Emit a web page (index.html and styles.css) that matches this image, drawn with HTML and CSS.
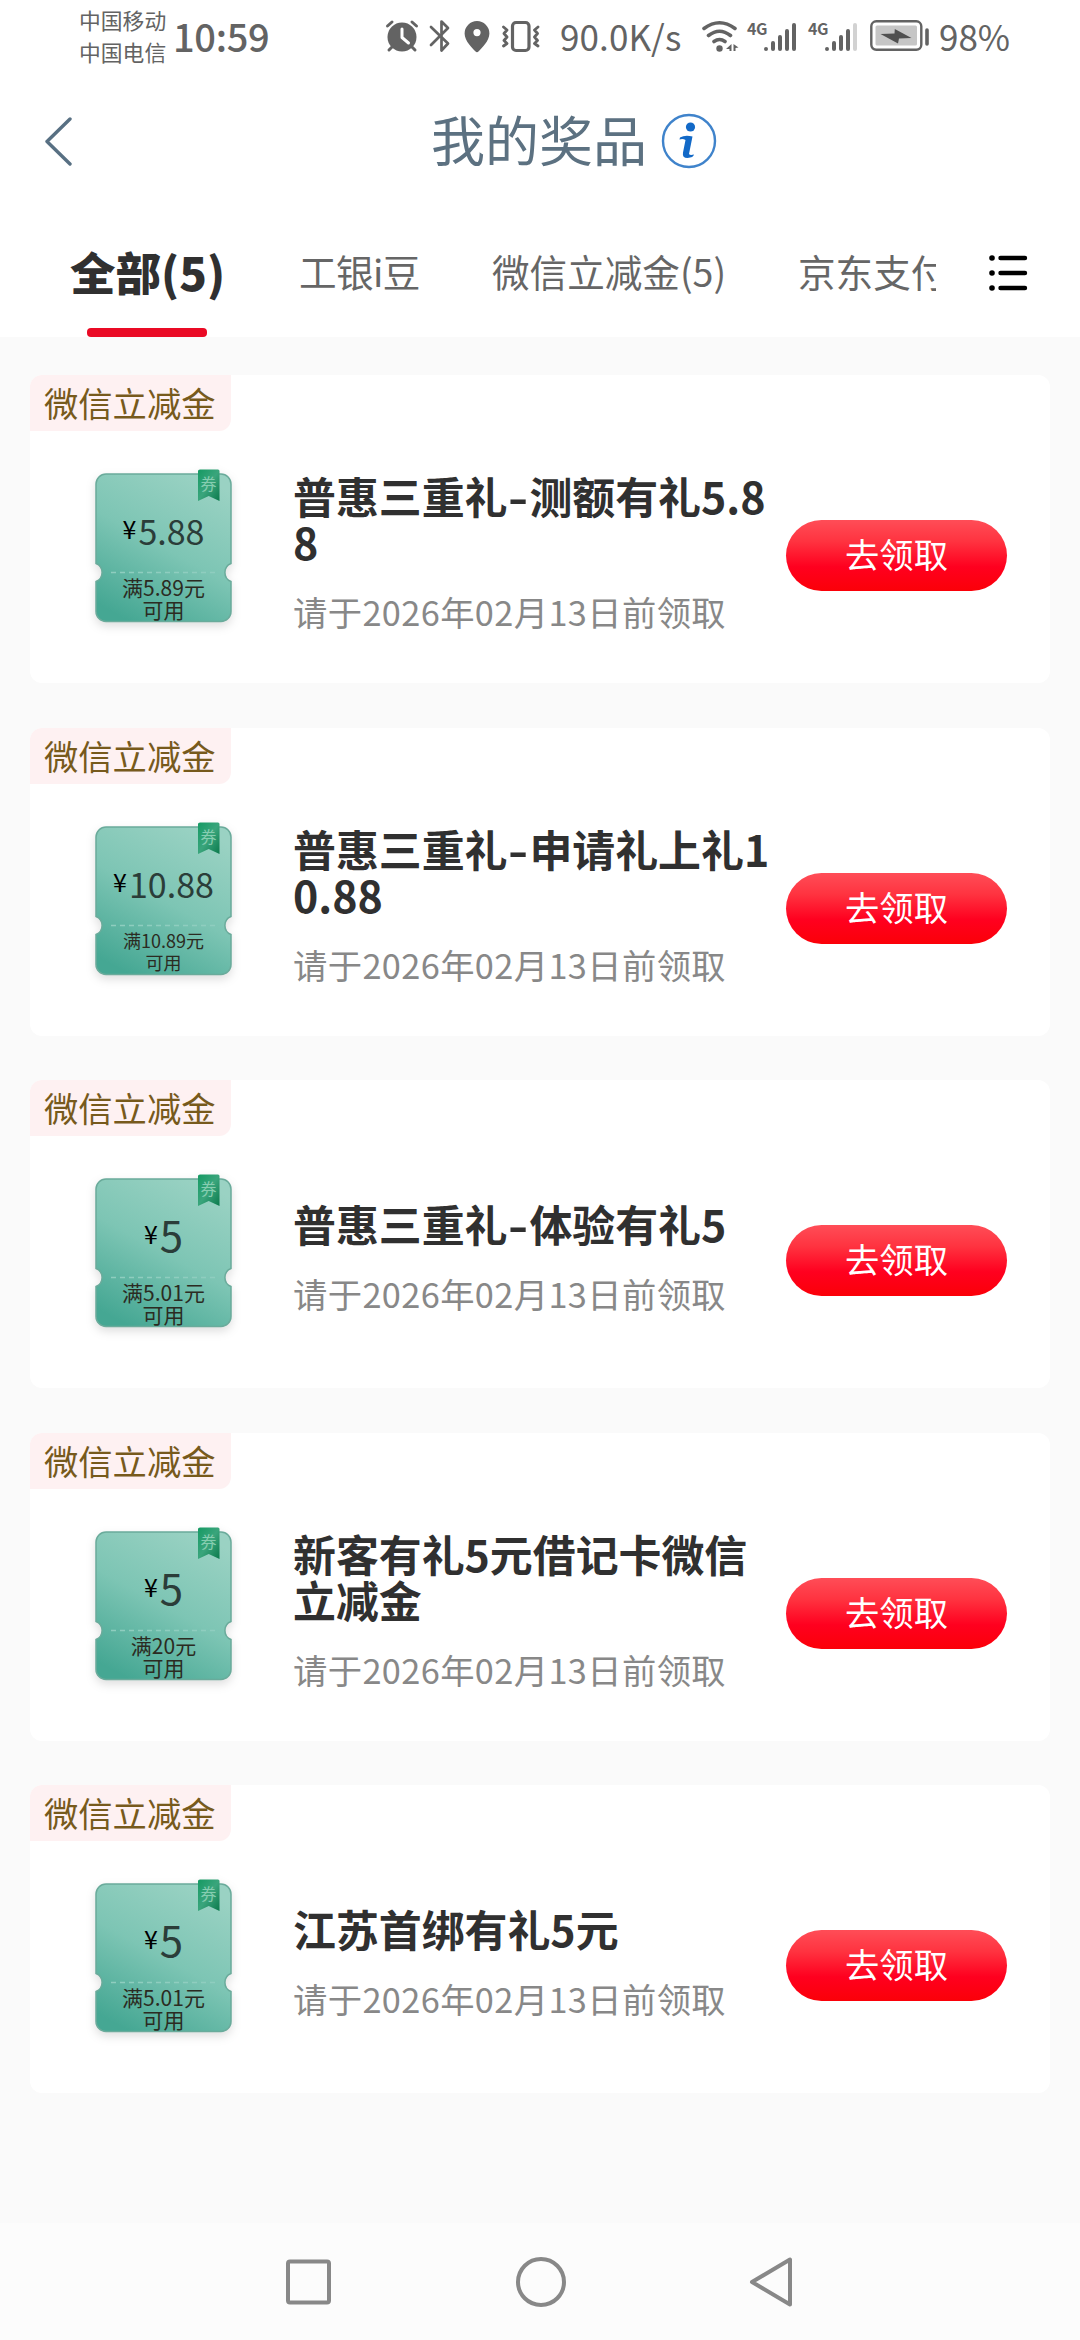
FILE: index.html
```html
<!DOCTYPE html>
<html lang="zh-CN">
<head>
<meta charset="utf-8">
<title>我的奖品</title>
<link rel="stylesheet" href="styles.css">
</head>
<body>
<svg class="defs" width="0" height="0" aria-hidden="true">
  <defs>
    <linearGradient id="couponFill" x1="0.75" y1="0" x2="0.25" y2="1">
      <stop offset="0" stop-color="#9ad2c3"/>
      <stop offset="0.5" stop-color="#7dc5b4"/>
      <stop offset="1" stop-color="#45a793"/>
    </linearGradient>
    <linearGradient id="ribbonFill" x1="0" y1="0" x2="1" y2="1">
      <stop offset="0" stop-color="#159a63"/>
      <stop offset="0.5" stop-color="#3aa57c"/>
      <stop offset="1" stop-color="#0b7a4c"/>
    </linearGradient>
    <symbol id="coupon" viewBox="0 0 137 154">
      <path d="M11 5H126A10 10 0 0 1 136 15V94.500A9.700 9.700 0 0 0 136 112.500V142.500A10 10 0 0 1 126 152.500H11A10 10 0 0 1 1 142.500V112.500A9.700 9.700 0 0 0 1 94.500V15A10 10 0 0 1 11 5Z" fill="url(#couponFill)" stroke="#6aab9b" stroke-width="1.500"/>
      <path d="M16 103.500H122" stroke="#8fcdbf" stroke-width="1.500" stroke-dasharray="5 4"/>
      <path d="M103 2Q103 0.500 105 0.500H123Q124.500 0.500 124.500 2V32L113.700 27L103 32Z" fill="url(#ribbonFill)"/>
    </symbol>
    <symbol id="signal" viewBox="0 0 34 32">
      <g stroke="#636363" stroke-width="4" stroke-linecap="round">
        <path d="M3 28V28.100M10 22V28M17 16V28M24 10V28"/>
      </g>
    </symbol>
  </defs>
</svg>

<div class="status">
  <div class="carriers"><span>中国移动</span><span>中国电信</span></div>
  <div class="clock">10:59</div>
  <svg class="ic-alarm" width="34" height="34" viewBox="0 0 34 34">
    <circle cx="17" cy="18" r="14.500" fill="#636363"/>
    <path d="M2.500 7L7 3M31.500 7L27 3M7 28L4 31M27 28L30 31" stroke="#636363" stroke-width="3" stroke-linecap="round"/>
    <path d="M17 10V18.500L23.500 24" fill="none" stroke="#fff" stroke-width="3" stroke-linecap="round" stroke-linejoin="round"/>
  </svg>
  <svg class="ic-bt" width="22" height="34" viewBox="0 0 22 34">
    <path d="M2 8L19 24.500L12.500 31.500V2.500L19 9L2 26" fill="none" stroke="#636363" stroke-width="2.700" stroke-linejoin="round" stroke-linecap="round"/>
  </svg>
  <svg class="ic-pin" width="26" height="34" viewBox="0 0 26 34">
    <path fill-rule="evenodd" fill="#636363" d="M13 2A12.400 12.400 0 0 1 25.400 14.400C25.400 22 17.500 29 14.700 32.300Q13 34 11.300 32.300C8.500 29 .6 22 .6 14.400A12.400 12.400 0 0 1 13 2ZM13 10A3.600 3.600 0 1 0 13 17.200A3.600 3.600 0 1 0 13 10Z"/>
  </svg>
  <svg class="ic-vib" width="40" height="34" viewBox="0 0 40 34">
    <rect x="11.500" y="3.500" width="16.500" height="28" rx="3.500" fill="none" stroke="#636363" stroke-width="3.200"/>
    <path d="M2.500 8L6 11L3 14.500L6 18L3 21.500L6 24.500L2.500 27M37 8L33.500 11L36.500 14.500L33.500 18L36.500 21.500L33.500 24.500L37 27" fill="none" stroke="#636363" stroke-width="2.800" stroke-linecap="round" stroke-linejoin="round"/>
  </svg>
  <div class="speed">90.0K/s</div>
  <svg class="ic-wifi" width="38" height="34" viewBox="0 0 38 34">
    <g fill="none" stroke="#636363" stroke-width="3.600" stroke-linecap="round">
      <path d="M3 9.500Q18.500 -2 34 9.500M7.500 16.500Q18.500 8 29.500 16.500M13 22.500Q18.500 18.500 24 22.500"/>
    </g>
    <circle cx="18.500" cy="29.500" r="3.200" fill="#636363"/>
    <path d="M30.500 25V32H28.500V30H25ZM32.500 32V25L37.500 28.500L34.500 29V32Z" fill="#636363"/>
  </svg>
  <span class="net">4G</span>
  <svg class="ic-sig" width="34" height="32" viewBox="0 0 34 32"><use href="#signal"/><path d="M31 4V28" stroke="#636363" stroke-width="4" stroke-linecap="round"/></svg>
  <span class="net net-second">4G</span>
  <svg class="ic-sig" width="34" height="32" viewBox="0 0 34 32"><use href="#signal"/><path d="M31 4V28" stroke="#d2d2d2" stroke-width="4" stroke-linecap="round"/></svg>
  <svg class="ic-batt" width="60" height="34" viewBox="0 0 60 34">
    <rect x="1.300" y="3.300" width="50" height="28.500" rx="5" fill="none" stroke="#636363" stroke-width="2.400"/>
    <rect x="5.500" y="7.500" width="41.500" height="20" rx="1.500" fill="#c6c6c6"/>
    <path d="M10.500 16L24.500 15.500L24.800 11L41.500 20L29 20.500L28 25.500Z" fill="#505050"/>
    <path d="M57 12V26" stroke="#636363" stroke-width="3.600" stroke-linecap="round"/>
  </svg>
  <div class="percent">98%</div>
</div>

<header class="titlebar">
  <svg class="back" width="30" height="52" viewBox="0 0 30 52"><path d="M25 4L2 26.500L25 49" fill="none" stroke="#587083" stroke-width="3.400" stroke-linecap="round" stroke-linejoin="round"/></svg>
  <h1 class="title">我的奖品</h1>
  <svg class="info" width="56" height="56" viewBox="0 0 56 56">
    <circle cx="28" cy="28" r="26" fill="none" stroke="#3f83cb" stroke-width="2.400"/>
    <circle cx="29.500" cy="14" r="4.600" fill="#1269c7"/>
    <path d="M19 24.500Q24 21.500 31.500 23.500L28 41Q29 42.500 33 41.500Q32.500 44.500 26.500 45Q21 45 22 39.500L24.500 27Q22 25.500 18.500 26.500Z" fill="#1269c7"/>
  </svg>
</header>

<nav class="tabs">
  <div class="tab-strip">
    <div class="tab tab-active">全部(5)</div>
    <div class="tab tab-beans">工银i豆</div>
    <div class="tab tab-wechat">微信立减金(5)</div>
    <div class="tab">京东支付</div>
  </div>
  <svg class="menu" width="40" height="38" viewBox="0 0 40 38">
    <g stroke="#000" stroke-linecap="round"><path d="M12.500 4H37M12.500 19H37M12.500 34H37" stroke-width="4.400"/><path d="M4 4H4.010M4 19H4.010M4 34H4.010" stroke-width="5.600"/></g>
  </svg>
</nav>

<main class="list">
  <section class="card">
    <div class="tag">微信立减金</div>
    <div class="row">
      <div class="coupon">
        <svg class="coupon-bg" width="137" height="154"><use href="#coupon"/></svg><span class="seal">券</span>
        <div class="amount"><span class="yen">¥</span>5.88</div>
        <div class="cond">满5.89元<br>可用</div>
      </div>
      <div class="info-col">
        <h2 class="name">普惠三重礼<span class="dash">-</span>测额有礼5.8<br>8</h2>
        <p class="date">请于2026年02月13日前领取</p>
      </div>
      <button class="claim">去领取</button>
    </div>
  </section>
  <section class="card">
    <div class="tag">微信立减金</div>
    <div class="row">
      <div class="coupon">
        <svg class="coupon-bg" width="137" height="154"><use href="#coupon"/></svg><span class="seal">券</span>
        <div class="amount"><span class="yen">¥</span>10.88</div>
        <div class="cond cond-small">满10.89元<br>可用</div>
      </div>
      <div class="info-col">
        <h2 class="name">普惠三重礼<span class="dash">-</span>申请礼上礼1<br>0.88</h2>
        <p class="date">请于2026年02月13日前领取</p>
      </div>
      <button class="claim">去领取</button>
    </div>
  </section>
  <section class="card">
    <div class="tag">微信立减金</div>
    <div class="row">
      <div class="coupon">
        <svg class="coupon-bg" width="137" height="154"><use href="#coupon"/></svg><span class="seal">券</span>
        <div class="amount amount-large"><span class="yen">¥</span>5</div>
        <div class="cond">满5.01元<br>可用</div>
      </div>
      <div class="info-col">
        <h2 class="name">普惠三重礼<span class="dash">-</span>体验有礼5</h2>
        <p class="date">请于2026年02月13日前领取</p>
      </div>
      <button class="claim">去领取</button>
    </div>
  </section>
  <section class="card">
    <div class="tag">微信立减金</div>
    <div class="row">
      <div class="coupon">
        <svg class="coupon-bg" width="137" height="154"><use href="#coupon"/></svg><span class="seal">券</span>
        <div class="amount amount-large"><span class="yen">¥</span>5</div>
        <div class="cond">满20元<br>可用</div>
      </div>
      <div class="info-col">
        <h2 class="name">新客有礼5元借记卡微信<br>立减金</h2>
        <p class="date">请于2026年02月13日前领取</p>
      </div>
      <button class="claim">去领取</button>
    </div>
  </section>
  <section class="card">
    <div class="tag">微信立减金</div>
    <div class="row">
      <div class="coupon">
        <svg class="coupon-bg" width="137" height="154"><use href="#coupon"/></svg><span class="seal">券</span>
        <div class="amount amount-large"><span class="yen">¥</span>5</div>
        <div class="cond">满5.01元<br>可用</div>
      </div>
      <div class="info-col">
        <h2 class="name">江苏首绑有礼5元</h2>
        <p class="date">请于2026年02月13日前领取</p>
      </div>
      <button class="claim">去领取</button>
    </div>
  </section>
</main>

<footer class="sysnav">
  <svg width="54" height="54" viewBox="0 0 54 54"><rect x="6" y="6.500" width="41" height="41" rx="2" fill="none" stroke="#888" stroke-width="4"/></svg>
  <svg width="54" height="54" viewBox="0 0 54 54"><circle cx="27" cy="27" r="23" fill="none" stroke="#888" stroke-width="4"/></svg>
  <svg width="54" height="54" viewBox="0 0 54 54"><path d="M45 4.500V49.500L7 27Z" fill="none" stroke="#888" stroke-width="4" stroke-linejoin="round"/></svg>
</footer>
</body>
</html>
```
FILE: styles.css
```css
* { box-sizing: border-box; margin: 0; padding: 0; }

body {
  width: 1080px;
  height: 2340px;
  display: flex;
  flex-direction: column;
  overflow: hidden;
  background: #fafafa;
  font-family: "Noto Sans CJK SC", sans-serif;
  white-space: nowrap;
}

.defs { display: block; position: absolute; }
svg { display: block; flex: none; }

/* system status bar */
.status {
  height: 80px;
  padding-left: 79px;
  display: flex;
  align-items: flex-start;
  background: #fff;
  color: #636363;
}
.carriers {
  width: 94px;
  padding-top: 4px;
  display: flex;
  flex-direction: column;
  font-size: 21.8px;
  line-height: 32px;
}
.clock {
  width: 212px;
  padding-top: 6px;
  font-size: 38px;
  line-height: 60px;
  height: 60px;
  font-weight: 500;
  letter-spacing: -0.3px;
}
.ic-alarm { margin-top: 19px; }
.ic-bt { margin: 19px 0 0 10px; }
.ic-pin { margin: 19px 0 0 13px; }
.ic-vib { margin: 19px 0 0 11px; }
.speed {
  width: 141px;
  margin-left: 19px;
  padding-top: 6px;
  font-size: 35px;
  line-height: 60px;
  letter-spacing: 0.1px;
}
.ic-wifi { margin-top: 19px; }
.net {
  width: 16px;
  margin-left: 8px;
  padding-top: 18px;
  font: 700 16px/20px "Noto Sans CJK SC", sans-serif;
  letter-spacing: -0.5px;
}
.net-second { margin-left: 11px; }
.ic-sig { margin-top: 21px; }
.ic-batt { margin: 18px 0 0 12px; }
.percent {
  margin-left: 9px;
  padding-top: 6px;
  font-size: 35px;
  line-height: 60px;
}

/* page title */
.titlebar {
  height: 122px;
  padding-left: 45px;
  display: flex;
  align-items: center;
  background: #fff;
}
.title {
  width: 228px;
  margin: -4px 0 0 356px;
  font-size: 54px;
  line-height: 80px;
  font-weight: 400;
  color: #5c7181;
}
.info { margin-left: 2px; }

/* category tabs */
.tabs {
  height: 135px;
  display: flex;
  background: #fff;
}
.tab-strip {
  width: 936px;
  padding-left: 70px;
  display: flex;
  overflow: hidden;
}
.tab {
  flex: none;
  height: 135px;
  font-size: 37.6px;
  line-height: 138px;
  color: #666;
}
.tab-active {
  position: relative;
  width: 229px;
  font-size: 45.5px;
  font-weight: 900;
  color: #303030;
}
.tab-active::after {
  content: "";
  position: absolute;
  left: 17px;
  bottom: 0;
  width: 120px;
  height: 9px;
  border-radius: 4px;
  background: #ea0a25;
}
.tab-beans { width: 193px; letter-spacing: -0.6px; }
.tab-wechat { width: 306px; }
.menu { margin: 52px 0 0 52px; }

/* prize cards */
.list {
  flex: 1;
  padding: 38px 30px 0;
  display: flex;
  flex-direction: column;
  gap: 44.6px;
}
.card {
  position: relative;
  height: 308px;
  flex: none;
  border-radius: 12px;
  background: #fff;
}
.tag {
  position: absolute;
  left: 0;
  top: 0;
  width: 201px;
  height: 56px;
  padding-left: 14px;
  border-radius: 12px 0 12px 0;
  background: #fef1f2;
  color: #775a1c;
  font-size: 34.3px;
  line-height: 54px;
}
.row {
  height: 308px;
  padding-left: 65px;
  display: flex;
}
.coupon {
  position: relative;
  width: 137px;
  height: 154px;
  margin-top: 94px;
  padding-top: 36px;
  text-align: center;
  color: #2b2b22;
}
.coupon-bg {
  position: absolute;
  left: 0;
  top: 0;
  filter: drop-shadow(0 4px 5px rgba(0, 0, 0, 0.13));
}
.seal {
  position: absolute;
  left: 103px;
  top: 3px;
  width: 21px;
  font-size: 16px;
  line-height: 22px;
  color: #86cdb0;
}
.amount {
  position: relative;
  height: 50px;
  display: flex;
  justify-content: center;
  font-size: 34px;
  line-height: 51px;
  color: #2b3d39;
}
.amount-large { font-size: 42px; line-height: 48px; }
.yen {
  margin-right: 2px;
  font-size: 25px;
  line-height: 46px;
  color: #000;
}
.cond {
  position: relative;
  margin-top: 21px;
  font-size: 21px;
  line-height: 22px;
}
.cond-small { font-size: 18px; }
.info-col {
  width: 492px;
  padding: 0 0 0 61px;
  margin-top: 47px;
  height: 259px;
  display: flex;
  flex-direction: column;
  justify-content: center;
}
.name {
  font-size: 42.9px;
  line-height: 46px;
  font-weight: 700;
  color: #303030;
}
.dash { display: inline-block; width: 22px; text-align: center; transform: scaleX(1.3); }
.date {
  margin-top: 27px;
  font-size: 34.3px;
  line-height: 40px;
  letter-spacing: 0.4px;
  color: #888;
}
.claim {
  width: 221px;
  height: 71px;
  margin: 145px 0 0 62px;
  border: 0;
  border-radius: 36px;
  background: linear-gradient(#ff4d57, #ff3340 30%, #ff001f 66%, #fb0008);
  color: #fff;
  font: 400 34.3px/65px "Noto Sans CJK SC", sans-serif;
  padding-bottom: 4px;
}

/* system navigation */
.sysnav {
  height: 117px;
  padding: 32px 281px 0 282px;
  display: flex;
  justify-content: space-between;
  background: #fcfcfc;
}
```
